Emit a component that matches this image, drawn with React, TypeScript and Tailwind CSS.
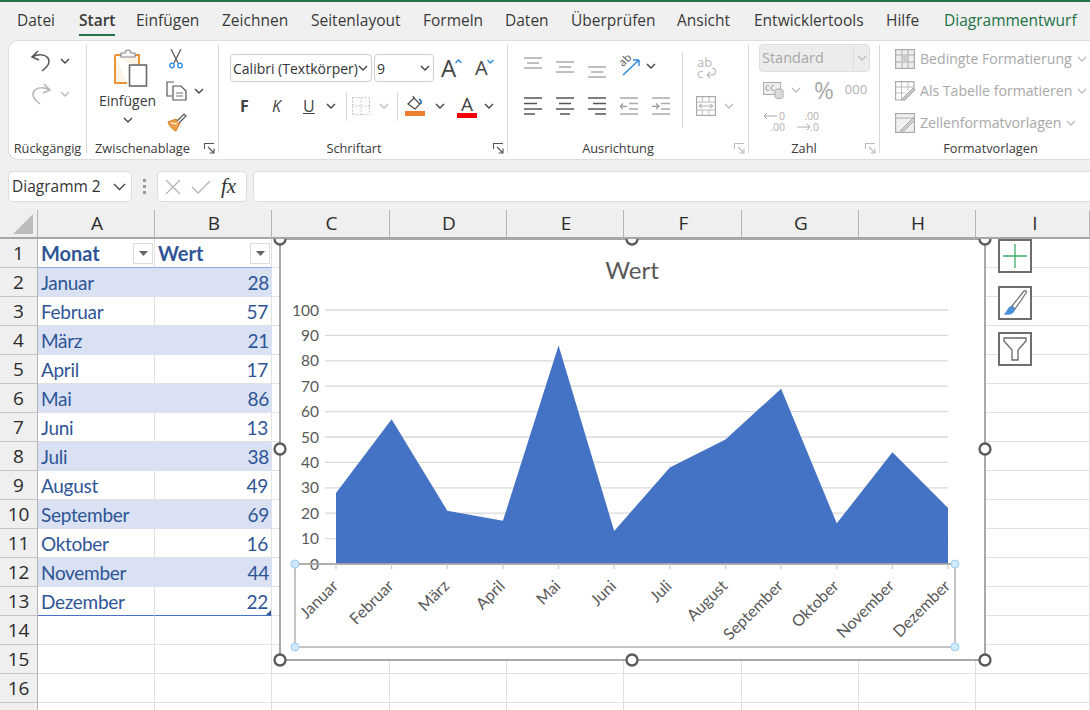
import React from 'react';

const ui = { fontFamily: '"Open Sans", "Noto Sans", sans-serif' };
const calibri = { fontFamily: 'Lato, "Noto Sans", sans-serif' };

const tabs = [
  { label: 'Datei', w: 'w-[62px]' },
  { label: 'Start', w: 'w-[57px]' },
  { label: 'Einfügen', w: 'w-[86px]' },
  { label: 'Zeichnen', w: 'w-[89px]' },
  { label: 'Seitenlayout', w: 'w-[112px]' },
  { label: 'Formeln', w: 'w-[82px]' },
  { label: 'Daten', w: 'w-[66px]' },
  { label: 'Überprüfen', w: 'w-[106px]' },
  { label: 'Ansicht', w: 'w-[77px]' },
  { label: 'Entwicklertools', w: 'w-[132px]' },
  { label: 'Hilfe', w: 'w-[58px]' },
];

const months = [
  ['Januar', 28], ['Februar', 57], ['März', 21], ['April', 17], ['Mai', 86], ['Juni', 13],
  ['Juli', 38], ['August', 49], ['September', 69], ['Oktober', 16], ['November', 44], ['Dezember', 22],
] as [string, number][];

const columns = ['A', 'B', 'C', 'D', 'E', 'F', 'G', 'H', 'I'];

const Chevron = ({ gray = false, className = '' }: { gray?: boolean; className?: string }) => (
  <svg width="10" height="6" viewBox="0 0 10 6" className={className}>
    <path d="M1 1l4 4 4-4" fill="none" stroke={gray ? '#bdbdbd' : '#444'} strokeWidth="1.4" />
  </svg>
);

const Launcher = ({ gray = false }: { gray?: boolean }) => (
  <svg width="11" height="11" viewBox="0 0 11 11">
    <path d="M.5 6V.5H10M4 4l6 6M10 5.5V10H5.5" fill="none" stroke={gray ? '#bdbdbd' : '#555'} strokeWidth="1.1" />
  </svg>
);

const Undo = ({ color }: { color: string }) => (
  <svg width="22" height="24" viewBox="0 0 22 24">
    <path d="M8 2L2 8l7 3M2 8c6-3 13-3 16 1 3 5-1 9-6 13" fill="none" stroke={color} strokeWidth="1.5" />
  </svg>
);

const Redo = ({ color }: { color: string }) => (
  <svg width="22" height="24" viewBox="0 0 22 24">
    <path d="M14 2l6 6-7 3M20 8C14 5 7 5 4 9c-3 5 1 9 6 13" fill="none" stroke={color} strokeWidth="1.5" />
  </svg>
);

const PasteIcon = () => (
  <svg width="36" height="38" viewBox="0 0 36 38">
    <path d="M2 6h24v14M2 6v28h12" fill="#fbf3e6" stroke="#e8953a" strokeWidth="2" />
    <path d="M8 8V4h4c0-4 6-4 6 0h4v4z" fill="#f4f4f4" stroke="#8a8a8a" strokeWidth="1.2" />
    <rect x="16.500" y="16" width="17" height="21" fill="#fff" stroke="#6a6a6a" strokeWidth="1.6" />
  </svg>
);

const Scissors = () => (
  <svg width="16" height="20" viewBox="0 0 16 20">
    <path d="M3 0l7 14M13 0L6 14" fill="none" stroke="#555" strokeWidth="1.2" />
    <circle cx="4" cy="16.500" r="2.300" fill="none" stroke="#2b88d8" strokeWidth="1.3" />
    <circle cx="12" cy="16.500" r="2.300" fill="none" stroke="#2b88d8" strokeWidth="1.3" />
  </svg>
);

const CopyIcon = () => (
  <svg width="21" height="20" viewBox="0 0 21 20">
    <path d="M8 1H1v14h5" fill="#fff" stroke="#555" strokeWidth="1.2" />
    <path d="M7 5h8l5 5v9H7z" fill="#fff" stroke="#555" strokeWidth="1.2" />
    <path d="M10 12h7M10 15h7" stroke="#777" strokeWidth="1" />
  </svg>
);

const BrushIcon = () => (
  <svg width="20" height="20" viewBox="0 0 20 20">
    <path d="M1 9l8-3 4 4-4 8C6 17 2 13 1 9z" fill="#f0a04b" stroke="#d97a1e" strokeWidth="1" />
    <path d="M4 10l6 1" stroke="#fff" strokeWidth="1.2" />
    <path d="M10 8l7-7 2 2-7 7" fill="#fff" stroke="#555" strokeWidth="1.2" />
  </svg>
);

const FontGrow = ({ up }: { up: boolean }) => (
  <div className={`relative flex items-center ${up ? 'w-[24px] text-[24px]' : 'w-[22px] text-[20px]'} text-[#444]`} style={ui}>
    <span className="leading-none">A</span>
    <svg width="7" height="5" viewBox="0 0 7 5" className="mt-[-14px] ml-[-1px] shrink-0">
      <path d={up ? 'M.5 4l3-3 3 3' : 'M.5 1l3 3 3-3'} fill="none" stroke="#2b88d8" strokeWidth="1.3" />
    </svg>
  </div>
);

const BorderIcon = () => (
  <svg width="18" height="18" viewBox="0 0 18 18">
    <rect x=".5" y=".5" width="17" height="17" fill="none" stroke="#bbb" strokeDasharray="1.500 1.500" />
    <path d="M9 1v16M1 9h16" stroke="#bbb" strokeDasharray="1.500 1.500" />
  </svg>
);

const FillIcon = () => (
  <svg width="20" height="22" viewBox="0 0 20 22">
    <path d="M3 9l6-6 6 6-5 5z" fill="#fff" stroke="#444" strokeWidth="1.2" />
    <path d="M9 3l-1-2" stroke="#444" strokeWidth="1.2" />
    <path d="M16 9v-3l-2-2" fill="none" stroke="#1e6fb8" strokeWidth="1.6" />
    <rect x="0" y="16" width="20" height="5" fill="#ed7d31" />
  </svg>
);

const FontColorIcon = () => (
  <div className="flex flex-col items-center w-[20px]">
    <span className="text-[19px] leading-[18px] text-[#444]" style={ui}>A</span>
    <div className="w-[20px] h-[5px] bg-[#f00000]" />
  </div>
);

const LeftLines = () => (
  <svg width="18" height="18" viewBox="0 0 18 18">
    <path d="M0 1h18M0 6.500h13M0 12h18M0 17h11" stroke="#555" strokeWidth="1.400" />
  </svg>
);
const CenterLines = () => (
  <svg width="18" height="18" viewBox="0 0 18 18">
    <path d="M0 1h18M3 6.500h12M0 12h18M4 17h10" stroke="#555" strokeWidth="1.400" />
  </svg>
);
const RightLines = () => (
  <svg width="18" height="18" viewBox="0 0 18 18">
    <path d="M0 1h18M5 6.500h13M0 12h18M7 17h11" stroke="#555" strokeWidth="1.400" />
  </svg>
);
const IndentIcon = ({ flip = false }: { flip?: boolean }) => (
  <svg width="18" height="18" viewBox="0 0 18 18">
    <path d="M0 1h18M9 6.500h9M9 12h9M0 17h18" stroke="#aaa" strokeWidth="1.300" />
    <path d={flip ? 'M0 9.300h7M4 6.500l3 2.800-3 2.800' : 'M7 9.300H0M3 6.500L0 9.300l3 2.800'} fill="none" stroke="#999" strokeWidth="1.200" />
  </svg>
);

const TopLines = ({ pad }: { pad: string }) => (
  <svg width="18" height="12" viewBox="0 0 18 12" className={pad}>
    <path d="M0 1h18M3 6h12M0 11h18" stroke="#aaa" strokeWidth="1.300" />
  </svg>
);

const OrientIcon = () => (
  <div className="relative w-[22px] h-[22px]">
    <svg width="22" height="22" viewBox="0 0 22 22">
      <path d="M4 20L20 5M20 5h-6M20 5v6" fill="none" stroke="#2b88d8" strokeWidth="1.4" />
    </svg>
    <span className="absolute left-[-1px] top-[-1px] text-[11px] leading-none text-[#555] -rotate-45" style={ui}>ab</span>
  </div>
);

// "ab" over "c" with the return arrow, all greyed out as in the disabled ribbon
const WrapIcon = () => (
  <div className="relative w-[18px] h-[22px] text-[13px] leading-[11px] text-[#b8b8b8]" style={ui}>
    <div>ab</div>
    <div>c</div>
    <svg width="12" height="12" viewBox="0 0 12 12" className="absolute left-[8px] top-[10px]">
      <path d="M7 1c5 1 5 7-1 7H2M5 5L2 8l3 3" fill="none" stroke="#b8b8b8" strokeWidth="1.100" />
    </svg>
  </div>
);

const MergeIcon = () => (
  <svg width="20" height="20" viewBox="0 0 20 20">
    <rect x=".6" y=".6" width="18.800" height="18.800" fill="none" stroke="#aaa" strokeWidth="1.200" />
    <path d="M1 6h18M1 14h18M6.500 1v5M13 1v5M6.500 14v5M13 14v5" stroke="#bbb" />
    <path d="M3 10h14M6 8l-3 2 3 2M14 8l3 2-3 2" fill="none" stroke="#aaa" />
  </svg>
);

const CurrencyIcon = () => (
  <svg width="21" height="20" viewBox="0 0 21 20">
    <rect x=".6" y="2.500" width="17" height="12" fill="#eee" stroke="#aaa" />
    <path d="M6 6c-2-1-3 0-3 2s1 3 3 2M11 6c-2-1-3 0-3 2s1 3 3 2" fill="none" stroke="#999" />
    <ellipse cx="16" cy="11" rx="4" ry="2" fill="#ddd" stroke="#aaa" />
    <path d="M12 11v6c0 2 8 2 8 0v-6" fill="#ddd" stroke="#aaa" />
  </svg>
);

const DecimalUp = () => (
  <div className="relative w-[22px] h-[22px] text-[10.500px] leading-[11px] text-[#b0b0b0]" style={ui}>
    <div className="text-right">0</div>
    <div className="text-right">.00</div>
    <svg width="14" height="8" viewBox="0 0 14 8" className="absolute left-0 top-[1px]">
      <path d="M14 4H1M4 1L1 4l3 3" fill="none" stroke="#aaa" />
    </svg>
  </div>
);

const DecimalDown = () => (
  <div className="relative w-[22px] h-[22px] text-[10.500px] leading-[11px] text-[#b0b0b0]" style={ui}>
    <div className="text-right">.00</div>
    <div className="text-right">.0</div>
    <svg width="14" height="8" viewBox="0 0 14 8" className="absolute left-0 top-[12px]">
      <path d="M0 4h13M10 1l3 3-3 3" fill="none" stroke="#aaa" />
    </svg>
  </div>
);

const CondIcon = () => (
  <svg width="20" height="20" viewBox="0 0 20 20">
    <rect x=".6" y=".6" width="18.800" height="18.800" fill="#eee" stroke="#aaa" strokeWidth="1.200" />
    <path d="M1 6h18M1 13h18M7 1v18M13 1v18" stroke="#aaa" />
    <rect x="7" y="6" width="6" height="7" fill="#ccc" />
  </svg>
);

const TableIcon = () => (
  <svg width="20" height="20" viewBox="0 0 20 20">
    <path d="M19 8V.6H.6V19H8" fill="none" stroke="#aaa" strokeWidth="1.200" />
    <path d="M1 6h18M1 12h9M6.500 1v18M13 1v8" stroke="#bbb" />
    <path d="M6 19l12-12 2 2-10 10z" fill="#c8c8c8" stroke="#aaa" />
  </svg>
);

const CellStyleIcon = () => (
  <svg width="20" height="20" viewBox="0 0 20 20">
    <rect x=".6" y=".6" width="18.800" height="18.800" fill="#f1f1f1" stroke="#aaa" strokeWidth="1.200" />
    <path d="M1 5h18" stroke="#aaa" />
    <path d="M5 18l13-13 2 2-11 11z" fill="#cfcfcf" stroke="#aaa" />
  </svg>
);

const Group = ({ label, width, labelPad = '', launcher, launcherGray, last, children }: { label: string; width: string; labelPad?: string; launcher?: boolean; launcherGray?: boolean; last?: boolean; children: React.ReactNode }) => (
  <div className={`${width} shrink-0 flex`}>
    <div className="flex-1 flex flex-col min-w-0">
      <div className="h-[98px]">{children}</div>
      <div className={`relative h-[20px] flex items-center justify-center ${labelPad} text-[12.800px] text-[#3a3a3a]`} style={ui}>
        {label}
        {launcher && (
          <div className="absolute right-[3px] top-[4px] flex">
            <Launcher gray={launcherGray} />
          </div>
        )}
      </div>
    </div>
    {!last && <div className="w-[1px] h-[108px] mt-[4px] bg-[#d8d8d8]" />}
  </div>
);

const StyleRow = ({ icon, label }: { icon: React.ReactNode; label: string }) => (
  <div className="h-[32px] flex items-center gap-[5px] pl-[15px] text-[14.100px] text-[#a8a8a8]" style={ui}>
    {icon}
    <span>{label}</span>
    <Chevron gray />
  </div>
);

const Ribbon = () => (
  <div className="ml-[8px] h-[120px] bg-white rounded-l-[10px] border border-r-0 border-[#dcdcdc] flex">
    <Group label="Rückgängig" width="w-[78px]">
      <div className="flex flex-col pt-[4px] pl-[21px]">
        <div className="h-[32px] flex items-center gap-[8px]"><Undo color="#555" /><Chevron /></div>
        <div className="h-[33px] flex items-center gap-[8px]"><Redo color="#b5b5b5" /><Chevron gray /></div>
      </div>
    </Group>
    <Group label="Zwischenablage" width="w-[132px]" labelPad="pr-[20px]" launcher>
      <div className="flex">
        <div className="w-[80px] flex flex-col items-center pt-[8px] pl-[1px] text-[14px] text-[#3a3a3a]" style={ui}>
          <div className="ml-[6px] flex"><PasteIcon /></div>
          <div className="leading-[20px] mt-[4px]">Einfügen</div>
          <Chevron className="mt-[6px]" />
        </div>
        <div className="flex flex-col pt-[2px]">
          <div className="h-[32px] flex items-center pl-[1px]"><Scissors /></div>
          <div className="h-[32px] flex items-center gap-[7px] ml-[-1px]"><CopyIcon /><Chevron /></div>
          <div className="h-[32px] flex items-center"><BrushIcon /></div>
        </div>
      </div>
    </Group>
    <Group label="Schriftart" width="w-[289px]" labelPad="pr-[18px]" launcher>
      <div className="flex flex-col pt-[13px] pl-[11px]">
        <div className="h-[28px] flex items-center">
          <div className="w-[142px] h-[28px] border border-[#cfcfcf] rounded-[4px] flex items-center justify-between pl-[2px] pr-[3px] text-[14px] text-[#333] whitespace-nowrap overflow-hidden" style={ui}>
            <span className="overflow-hidden">Calibri (Textkörper)</span><Chevron className="shrink-0" />
          </div>
          <div className="ml-[2px] w-[60px] h-[28px] border border-[#cfcfcf] rounded-[4px] flex items-center justify-between pl-[2px] pr-[3px] text-[14px] text-[#333]" style={ui}>
            <span>9</span><Chevron />
          </div>
          <div className="ml-[7px] flex gap-[10px]">
            <FontGrow up />
            <FontGrow up={false} />
          </div>
        </div>
        <div className="h-[28px] mt-[10px] flex items-center text-[#444]" style={ui}>
          <span className="w-[14px] ml-[10px] text-[16px] font-bold">F</span>
          <span className="w-[14px] ml-[18px] text-[16px] italic">K</span>
          <span className="w-[14px] ml-[17px] text-[16px] underline">U</span>
          <Chevron className="ml-[9px]" />
          <div className="w-[1px] h-[29px] ml-[10px] bg-[#d8d8d8]" />
          <div className="ml-[5px]"><BorderIcon /></div>
          <Chevron gray className="ml-[9px]" />
          <div className="w-[1px] h-[29px] ml-[8px] bg-[#d8d8d8]" />
          <div className="ml-[7px] flex"><FillIcon /></div>
          <Chevron className="ml-[10px]" />
          <div className="ml-[12px]"><FontColorIcon /></div>
          <Chevron className="ml-[7px]" />
        </div>
      </div>
    </Group>
    <Group label="Ausrichtung" width="w-[241px]" labelPad="pr-[20px]" launcher launcherGray>
      <div className="flex">
        <div className="w-[174px] flex flex-col pt-[13px] pl-[16px]">
          <div className="h-[28px] flex items-start gap-[14px]">
            <TopLines pad="mt-[3px]" />
            <TopLines pad="mt-[7px]" />
            <TopLines pad="mt-[12px]" />
            <div className="flex items-center gap-[5px] ml-[-1px] mt-[1px]"><OrientIcon /><Chevron /></div>
          </div>
          <div className="h-[28px] mt-[10px] flex items-center gap-[14px]">
            <LeftLines /><CenterLines /><RightLines /><IndentIcon /><IndentIcon flip />
          </div>
        </div>
        <div className="w-[1px] h-[76px] mt-[11px] bg-[#d8d8d8]" />
        <div className="flex flex-col pt-[13px] pl-[13px]">
          <div className="h-[28px] flex items-center pl-[1px]"><WrapIcon /></div>
          <div className="h-[28px] mt-[10px] flex items-center gap-[8px]"><MergeIcon /><Chevron gray /></div>
        </div>
      </div>
    </Group>
    <Group label="Zahl" width="w-[131px]" labelPad="pr-[20px]" launcher launcherGray>
      <div className="flex flex-col pt-[3px] pl-[10px]">
        <div className="w-[111px] h-[28px] bg-[#ececec] border border-[#dedede] rounded-[4px] flex items-center text-[14.500px] text-[#a8a8a8]" style={ui}>
          <span className="flex-1 pl-[2px]">Standard</span>
          <div className="w-[16px] h-full border-l border-[#dedede] flex items-center justify-center"><Chevron gray /></div>
        </div>
        <div className="h-[32px] mt-[2px] flex items-center pl-[4px]">
          <CurrencyIcon />
          <Chevron gray className="ml-[7px]" />
          <span className="ml-[13px] text-[24px] leading-none text-[#a8a8a8]" style={ui}>%</span>
          <span className="ml-[11px] text-[13px] text-[#b0b0b0]" style={ui}>000</span>
        </div>
        <div className="h-[32px] flex items-center gap-[12px] pl-[4px]"><DecimalUp /><DecimalDown /></div>
      </div>
    </Group>
    <Group label="Formatvorlagen" width="w-[209px]" labelPad="pl-[12px]" last>
      <div className="flex flex-col pt-[2px] whitespace-nowrap">
        <StyleRow icon={<CondIcon />} label="Bedingte Formatierung" />
        <StyleRow icon={<TableIcon />} label="Als Tabelle formatieren" />
        <StyleRow icon={<CellStyleIcon />} label="Zellenformatvorlagen" />
      </div>
    </Group>
  </div>
);

const FormulaBar = () => (
  <div className="mt-[11px] h-[31px] flex items-stretch">
    <div className="ml-[8px] w-[124px] bg-white border border-[#dcdcdc] rounded-[5px] flex items-center justify-between pl-[3px] pr-[5px] text-[15.500px] text-[#333]" style={ui}>
      <span>Diagramm 2</span>
      <svg width="13" height="8" viewBox="0 0 13 8"><path d="M1 1l5.500 5.500L12 1" fill="none" stroke="#444" strokeWidth="1.300" /></svg>
    </div>
    <div className="w-[25px] flex flex-col items-center justify-center gap-[3px]">
      <div className="w-[3px] h-[3px] bg-[#999]" />
      <div className="w-[3px] h-[3px] bg-[#999]" />
      <div className="w-[3px] h-[3px] bg-[#999]" />
    </div>
    <div className="w-[90px] bg-white border border-[#dcdcdc] rounded-[5px] flex items-center pl-[7px]">
      <svg width="16" height="16" viewBox="0 0 16 16"><path d="M1 1l14 14M15 1L1 15" stroke="#b5b5b5" strokeWidth="1.300" /></svg>
      <svg width="20" height="16" viewBox="0 0 20 16" className="ml-[10px]"><path d="M1 8l6 6L19 2" fill="none" stroke="#b5b5b5" strokeWidth="1.300" /></svg>
      <span className="ml-[10px] text-[21px] italic text-[#333] leading-none" style={{ fontFamily: '"Liberation Serif", serif' }}>fx</span>
    </div>
    <div className="ml-[6px] flex-1 bg-white border border-r-0 border-[#dcdcdc] rounded-l-[5px]" />
  </div>
);

const FilterButton = () => (
  <div className="w-[20px] h-[21px] bg-white border border-[#dcdcdc] flex items-center justify-center shrink-0">
    <svg width="9" height="5" viewBox="0 0 9 5"><path d="M0 0h9L4.500 5z" fill="#666" /></svg>
  </div>
);

const Sheet = () => {
  const rows = Array.from({ length: 17 }, (_, i) => i + 1);
  return (
    <div className="grid grid-cols-[38px_117px_117px_118px_117px_117px_118px_117px_117px_1fr] auto-rows-[29px]">
      <div className="bg-[#efefef] border-r border-[#b4b4b4] border-b-2 border-b-[#a6a6a6] flex items-center justify-end pr-[4px]">
        <svg width="20" height="20" viewBox="0 0 20 20"><path d="M20 0v20H0z" fill="#bcbcbc" /></svg>
      </div>
      {columns.map(c => (
        <div key={c} className={`bg-[#efefef] border-r border-[#b4b4b4] border-b-2 border-b-[#a6a6a6] flex items-center justify-center ${c === 'I' ? 'pl-[5px]' : 'pl-[2px]'} text-[19px] text-[#2b2b2b]`} style={ui}>
          {c}
        </div>
      ))}
      {rows.map(r => {
        const data = r >= 2 && r <= 13 ? months[r - 2] : null;
        const band = r % 2 === 0 && r <= 13;
        const cellBg = band ? 'bg-[#d9e1f2]' : 'bg-white';
        const tableLine = r === 1 ? 'border-b-[#8ea9db]' : r === 13 ? 'border-b-[#4472c4]' : band ? 'border-b-[#d9e1f2]' : 'border-b-[#e1e1e1]';
        const cellFont = r === 1 ? 'text-[20px] font-bold' : 'pt-[2px] text-[19px] tracking-[-0.3px]';
        return (
          <React.Fragment key={r}>
            <div className="bg-[#efefef] border-r border-[#b4b4b4] border-b border-b-[#c4c4c4] flex items-center justify-center text-[19px] text-[#2b2b2b]" style={ui}>
              {r <= 16 ? r : ''}
            </div>
            <div className={`${cellBg} border-b ${tableLine} ${band ? '' : 'border-r border-r-[#e1e1e1]'} flex items-center justify-between pl-[3px] pr-[1px] ${cellFont} text-[#2f5597]`} style={calibri}>
              {r === 1 ? 'Monat' : data ? data[0] : ''}
              {r === 1 && <FilterButton />}
            </div>
            <div className={`relative ${cellBg} border-b ${tableLine} ${band ? '' : 'border-r border-r-[#e1e1e1]'} flex items-center ${r === 1 ? 'justify-between pl-[3px] pr-[1px]' : 'justify-end pr-[3px]'} ${cellFont} text-[#2f5597]`} style={calibri}>
              {r === 1 ? 'Wert' : data ? data[1] : ''}
              {r === 1 && <FilterButton />}
              {r === 13 && (
                <svg width="5" height="5" viewBox="0 0 5 5" className="absolute right-0 bottom-0">
                  <path d="M5 0v5H0z" fill="#2f5597" />
                </svg>
              )}
            </div>
            {columns.slice(2).map(c => (
              <div key={c} className="bg-white border-r border-b border-[#e1e1e1]" />
            ))}
          </React.Fragment>
        );
      })}
    </div>
  );
};

const axisY = (v: number) => 564 - v * 2.54;
const axisX = (i: number) => 336 + i * 55.64;

const ChartOverlay = () => {
  const points = months.map(([, v], i) => `${axisX(i)},${axisY(v)}`).join(' ');
  const handles = [[280, 239], [632, 239], [985, 239], [280, 449], [985, 449], [280, 660], [632, 660], [985, 660]];
  const axisHandles = [[295, 564], [955, 564], [295, 647], [955, 647]];
  return (
    <svg width="725" height="432" viewBox="270 239 725 432" className="absolute left-[270px] top-[29px]" style={calibri}>
      <rect x="280" y="239" width="705" height="421" fill="#fff" stroke="#8c8c8c" strokeWidth="1.500" />
      <text x="632" y="279" textAnchor="middle" fontSize="24" fill="#595959">Wert</text>
      {Array.from({ length: 11 }, (_, i) => i * 10).map(v => (
        <g key={v}>
          {v > 0 && <line x1="325" x2="948" y1={axisY(v)} y2={axisY(v)} stroke="#d9d9d9" strokeWidth="1.300" />}
          <text x="319" y={axisY(v) + 5.500} textAnchor="end" fontSize="15.500" fill="#595959">{v}</text>
        </g>
      ))}
      <polygon points={`336,564 ${points} 948,564`} fill="#4472c4" />
      <line x1="296" x2="955" y1="564" y2="564" stroke="#a6a6a6" strokeWidth="1.300" />
      <rect x="295" y="564" width="660" height="83" fill="none" stroke="#a6a6a6" strokeWidth="1.300" />
      {months.map(([m], i) => (
        <g key={m}>
          <line x1={axisX(i)} x2={axisX(i)} y1="564" y2="569" stroke="#c8c8c8" strokeWidth="1.200" />
          <text transform={`translate(${axisX(i) + 3},${587}) rotate(-45)`} textAnchor="end" fontSize="16" fill="#595959">{m}</text>
        </g>
      ))}
      {axisHandles.map(([x, y]) => (
        <circle key={`${x}-${y}`} cx={x} cy={y} r="4" fill="#cfe8fb" stroke="#9fd0f2" strokeWidth="1" />
      ))}
      {handles.map(([x, y]) => (
        <circle key={`${x}-${y}`} cx={x} cy={y} r="5.500" fill="#fff" stroke="#595959" strokeWidth="2.300" />
      ))}
    </svg>
  );
};

const ChartButton = ({ children }: { children: React.ReactNode }) => (
  <div className="w-[34px] h-[34px] bg-white border-2 border-[#6e6e6e] flex items-center justify-center">{children}</div>
);

const ChartButtons = () => (
  <div className="absolute left-[998px] top-[29px] flex flex-col gap-[12.500px]">
    <ChartButton>
      <svg width="24" height="24" viewBox="0 0 24 24"><path d="M12 0v24M0 12h24" stroke="#3fae6a" strokeWidth="1.300" /></svg>
    </ChartButton>
    <ChartButton>
      <svg width="26" height="28" viewBox="0 0 26 28">
        <path d="M10 17L22 2c1-1 3 0 2 2L13 20z" fill="#fff" stroke="#777" strokeWidth="1.300" />
        <path d="M1 25c4 0 4-8 9-8l3 3c0 5-7 7-12 5z" fill="#4a90d9" />
      </svg>
    </ChartButton>
    <ChartButton>
      <svg width="26" height="26" viewBox="0 0 26 26">
        <path d="M2 2h22v3l-8 9v10h-6V14L2 5z" fill="none" stroke="#6a6a6a" strokeWidth="1.300" />
      </svg>
    </ChartButton>
  </div>
);

export default function App() {
  return (
    <div className="w-[1090px] h-[710px] overflow-hidden bg-[#f0f0f0]">
      <div className="h-[2px] bg-[#217346]" />
      <div className="h-[38px] flex pl-[17px] text-[15.500px] whitespace-nowrap" style={ui}>
        {tabs.map(t => (
          <div key={t.label} className={`${t.w} pt-[7px] text-[#3a3a3a]`}>
            <div className={t.label === 'Start' ? 'inline-block font-semibold h-[27px] border-b-[2px] border-[#217346]' : ''}>{t.label}</div>
          </div>
        ))}
        <div className="pt-[7px] text-[#217346]">Diagrammentwurf</div>
      </div>
      <Ribbon />
      <FormulaBar />
      <div className="mt-[8px] relative">
        <Sheet />
        <ChartOverlay />
        <ChartButtons />
      </div>
    </div>
  );
}
